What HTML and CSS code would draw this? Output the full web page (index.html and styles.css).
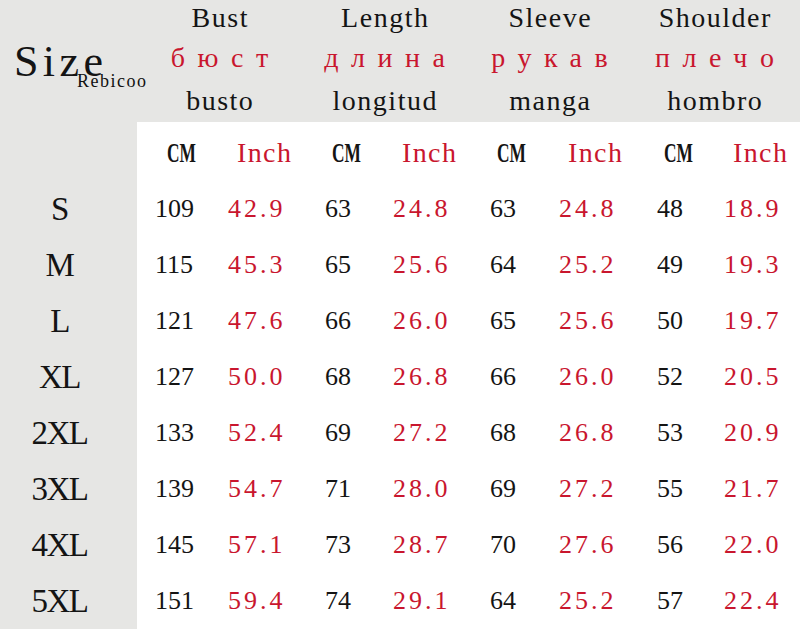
FILE: index.html
```html
<!DOCTYPE html>
<html>
<head>
<meta charset="utf-8">
<link rel="stylesheet" href="styles.css">
</head>
<body>
<div class="top">
  <div class="size">Size</div>
  <div class="group"><div class="en">Bust</div><div class="ru">бюст</div><div class="es">busto</div></div>
  <div class="group"><div class="en">Length</div><div class="ru">длина</div><div class="es">longitud</div></div>
  <div class="group"><div class="en">Sleeve</div><div class="ru">рукав</div><div class="es">manga</div></div>
  <div class="group"><div class="en">Shoulder</div><div class="ru">плечо</div><div class="es">hombro</div></div>
  <span class="mark">Rebicoo</span>
</div>
<div class="table">
  <div class="labels">
    <div></div>
    <div>S</div><div>M</div><div>L</div><div>XL</div><div>2XL</div><div>3XL</div><div>4XL</div><div>5XL</div>
  </div>
  <div class="panel">
    <div class="hc"><span>CM</span></div><div class="hi">Inch</div>
    <div class="hc"><span>CM</span></div><div class="hi">Inch</div>
    <div class="hc"><span>CM</span></div><div class="hi">Inch</div>
    <div class="hc"><span>CM</span></div><div class="hi">Inch</div>

    <div class="c">109</div><div class="i">42.9</div><div class="c">63</div><div class="i">24.8</div><div class="c">63</div><div class="i">24.8</div><div class="c">48</div><div class="i">18.9</div>
    <div class="c">115</div><div class="i">45.3</div><div class="c">65</div><div class="i">25.6</div><div class="c">64</div><div class="i">25.2</div><div class="c">49</div><div class="i">19.3</div>
    <div class="c">121</div><div class="i">47.6</div><div class="c">66</div><div class="i">26.0</div><div class="c">65</div><div class="i">25.6</div><div class="c">50</div><div class="i">19.7</div>
    <div class="c">127</div><div class="i">50.0</div><div class="c">68</div><div class="i">26.8</div><div class="c">66</div><div class="i">26.0</div><div class="c">52</div><div class="i">20.5</div>
    <div class="c">133</div><div class="i">52.4</div><div class="c">69</div><div class="i">27.2</div><div class="c">68</div><div class="i">26.8</div><div class="c">53</div><div class="i">20.9</div>
    <div class="c">139</div><div class="i">54.7</div><div class="c">71</div><div class="i">28.0</div><div class="c">69</div><div class="i">27.2</div><div class="c">55</div><div class="i">21.7</div>
    <div class="c">145</div><div class="i">57.1</div><div class="c">73</div><div class="i">28.7</div><div class="c">70</div><div class="i">27.6</div><div class="c">56</div><div class="i">22.0</div>
    <div class="c">151</div><div class="i">59.4</div><div class="c">74</div><div class="i">29.1</div><div class="c">64</div><div class="i">25.2</div><div class="c">57</div><div class="i">22.4</div>
  </div>
</div>
</body>
</html>
```

FILE: styles.css
```css
html, body {
  margin: 0;
  padding: 0;
  height: 629px;
  overflow: hidden;
  background: #e6e6e4;
  font-family: "Liberation Serif", "Times New Roman", serif;
  color: #141414;
}

.top {
  position: relative;
  display: grid;
  grid-template-columns: 137px repeat(4, 165px);
  height: 122px;
}

.size {
  padding: 37px 0 0 14px;
  font-size: 44px;
  line-height: 50px;
  letter-spacing: 4.4px;
}

.mark {
  position: absolute;
  left: 77px;
  top: 72px;
  font-size: 18px;
  line-height: 18px;
  letter-spacing: 1.5px;
  color: #111;
}

.group {
  display: flex;
  flex-direction: column;
  align-items: center;
}

.en {
  font-size: 28px;
  line-height: 36px;
  height: 36px;
  letter-spacing: 1.5px;
  padding-left: 1.5px;
}

.ru {
  font-size: 28px;
  line-height: 44px;
  height: 44px;
  letter-spacing: 12.5px;
  padding-left: 12.5px;
  color: #c9162e;
}

.es {
  font-size: 28px;
  line-height: 42px;
  height: 42px;
  letter-spacing: 1.5px;
  padding-left: 1.5px;
}

.table {
  display: flex;
  height: 507px;
}

.labels {
  width: 119px;
  padding: 3px 18px 0 0;
  display: grid;
  grid-auto-rows: 56px;
  align-content: start;
  text-align: center;
  font-size: 33px;
  line-height: 56px;
  letter-spacing: -1.5px;
}

.panel {
  flex: 1;
  background: #fff;
  display: grid;
  grid-template-columns: 73px 97px 68px 97px 69px 98px 67px 1fr;
  grid-auto-rows: 56px;
  align-content: start;
  padding: 3px 0 0 18px;
}

.c {
  font-size: 26px;
  line-height: 56px;
  color: #141414;
}

.i {
  font-size: 26px;
  line-height: 56px;
  letter-spacing: 3px;
  color: #c9162e;
}

.hc {
  font-size: 28px;
  line-height: 56px;
  padding-left: 7px;
}

.hc:first-child {
  padding-left: 12px;
}

.hc span {
  display: inline-block;
  font-weight: bold;
  transform: scaleX(0.62);
  transform-origin: left center;
}

.hi {
  font-size: 28px;
  line-height: 56px;
  letter-spacing: 1.4px;
  padding-left: 9px;
  color: #c9162e;
}
```
